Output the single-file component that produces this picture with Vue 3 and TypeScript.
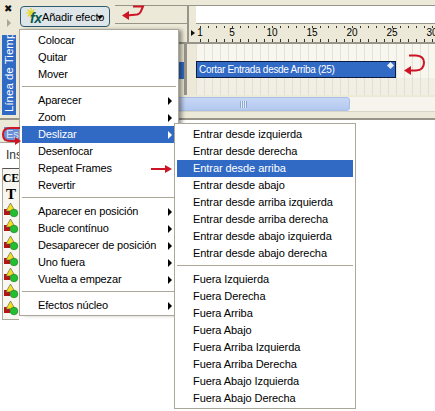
<template>
  <div class="app">
    <div class="top">
      <div class="rail">
        <span class="close">✖</span>
        <span class="play"></span>
        <div class="vtab"><span>Línea de Tiempo</span></div>
      </div>
      <div class="work">
        <div class="head">
          <div class="tools">
            <button class="fx-btn">
              <span class="fx-icon">
                <svg width="10" height="10" viewBox="0 0 10 10" class="spark">
                  <path d="M5 0V10M0 5H10M1.5 1.5L8.5 8.5M8.5 1.5L1.5 8.5" stroke="#e8d820" stroke-width="1.2" />
                </svg>
                <i>fx</i>
              </span>
              <span class="fx-label">Añadir efecto</span>
              <span class="caret"></span>
            </button>
          </div>
          <div class="layer-head"></div>
          <div class="frame-head">
            <div class="strip"></div>
            <div class="ruler">
              <span class="first-mark"></span>
              <span v-for="n in rulerMarks" :key="n" class="mark" :class="{ one: n === 1 }">{{ n }}</span>
            </div>
          </div>
        </div>
        <div class="tracks">
          <div class="layers"><div class="layer-sel"></div></div>
          <div class="frames">
            <div class="row"></div>
            <div class="row clip-row">
              <div class="clip">
                Cortar Entrada desde Arriba (25)
                <span class="key"></span>
              </div>
            </div>
            <div class="row tint"></div>
          </div>
        </div>
        <div class="hscroll">
          <div class="thumb"><span class="grip"></span></div>
        </div>
      </div>
    </div>

    <div class="lower">
      <div class="side">
        <div class="tabs"><span class="esc">Esc</span></div>
        <div class="ins">Ins</div>
        <div class="list">
          <b class="ce">CE</b>
          <b class="tt">T</b>
          <svg v-for="n in 7" :key="n" class="shapes" width="16" height="16" viewBox="0 0 16 16">
            <rect x="1" y="7" width="6" height="6" fill="#b01818" />
            <path d="M7.5 1L12 9H3Z" fill="#f2e020" stroke="#555" stroke-width="0.6" />
            <circle cx="11" cy="11" r="3.8" fill="#22c030" stroke="#157020" stroke-width="0.6" />
          </svg>
        </div>
      </div>
    </div>

    <div class="menu main-menu">
      <template v-for="(item, i) in mainItems" :key="i">
        <div v-if="item.sep" class="sep"></div>
        <div v-else class="item" :class="{ on: item.on }">
          {{ item.label }}
          <span v-if="item.sub" class="tri"></span>
        </div>
      </template>
    </div>

    <div class="menu sub-menu">
      <template v-for="(item, i) in subItems" :key="i">
        <div v-if="item.sep" class="sep"></div>
        <div v-else class="item" :class="{ on: item.on }">{{ item.label }}</div>
      </template>
    </div>

    <svg class="marks" width="435" height="411" viewBox="0 0 435 411">
      <g fill="none" stroke="#cc1525" stroke-width="2">
        <path d="M127 15.5L137 14.5Q140 14 141 11L143 6.5H133" />
        <path d="M410 70.5H416Q424 70 424 62.5Q424 56 416 55.5H409" />
        <path d="M151 169H167" />
        <path d="M20 128H10Q3 128 3 134.5Q3 141 10 141H17" />
      </g>
      <g fill="#cc1525">
        <path d="M122 15.5L129 11V20Z" />
        <path d="M404 70.5L411 66V75Z" />
        <path d="M172 169L165 165V173Z" />
        <path d="M21 141L15 137V145Z" />
      </g>
    </svg>
  </div>
</template>

<script setup lang="ts">
interface MenuItem {
  label?: string;
  sub?: boolean;
  on?: boolean;
  sep?: boolean;
}

const rulerMarks = [1, 5, 10, 15, 20, 25, 30];

const mainItems: MenuItem[] = [
  { label: "Colocar" },
  { label: "Quitar" },
  { label: "Mover" },
  { sep: true },
  { label: "Aparecer", sub: true },
  { label: "Zoom", sub: true },
  { label: "Deslizar", sub: true, on: true },
  { label: "Desenfocar" },
  { label: "Repeat Frames" },
  { label: "Revertir" },
  { sep: true },
  { label: "Aparecer en posición", sub: true },
  { label: "Bucle contínuo", sub: true },
  { label: "Desaparecer de posición", sub: true },
  { label: "Uno fuera", sub: true },
  { label: "Vuelta a empezar", sub: true },
  { sep: true },
  { label: "Efectos núcleo", sub: true },
];

const subItems: MenuItem[] = [
  { label: "Entrar desde izquierda" },
  { label: "Entrar desde derecha" },
  { label: "Entrar desde arriba", on: true },
  { label: "Entrar desde abajo" },
  { label: "Entrar desde arriba izquierda" },
  { label: "Entrar desde arriba derecha" },
  { label: "Entrar desde abajo izquierda" },
  { label: "Entrar desde abajo derecha" },
  { sep: true },
  { label: "Fuera Izquierda" },
  { label: "Fuera Derecha" },
  { label: "Fuera Arriba" },
  { label: "Fuera Abajo" },
  { label: "Fuera Arriba Izquierda" },
  { label: "Fuera Arriba Derecha" },
  { label: "Fuera Abajo Izquierda" },
  { label: "Fuera Abajo Derecha" },
];
</script>

<style>
html,
body {
  margin: 0;
  background: #fff;
}
</style>

<style scoped>
.app {
  position: relative;
  width: 435px;
  height: 411px;
  overflow: hidden;
  display: flex;
  flex-direction: column;
  background: #fff;
  font-family: "Liberation Sans", Arial, sans-serif;
  font-size: 11px;
  color: #000;
}

.top {
  display: flex;
  height: 120px;
  box-sizing: border-box;
  background: #ece9d8;
  border-bottom: 2px solid #97958a;
}

.rail {
  width: 20px;
  flex: none;
  display: flex;
  flex-direction: column;
  align-items: flex-start;
}

.close {
  margin: 2px 0 0 4px;
  height: 14px;
  font-size: 10px;
  line-height: 14px;
  color: #111;
}

.play {
  margin: 3px 0 0 7px;
  width: 0;
  height: 0;
  border-left: 4px solid #a9a793;
  border-top: 4px solid transparent;
  border-bottom: 4px solid transparent;
}

.vtab {
  margin: 8px 0 0 2px;
  width: 14px;
  height: 80px;
  background: #316ac5;
  overflow: hidden;
  display: flex;
  justify-content: center;
  align-items: flex-start;
  transform: rotate(180deg);
}

.vtab span {
  writing-mode: vertical-rl;
  padding-top: 3px;
  color: #fff;
  font-size: 11.5px;
  line-height: 14px;
  white-space: nowrap;
}

.work {
  flex: 1;
  min-width: 0;
  padding-top: 5px;
  display: flex;
  flex-direction: column;
}

.head {
  display: flex;
  height: 37px;
  flex: none;
  border-bottom: 2px solid #97958a;
}

.tools {
  width: 95px;
  flex: none;
  margin-top: 1px;
}

.fx-btn {
  position: relative;
  display: flex;
  align-items: center;
  box-sizing: border-box;
  width: 90px;
  height: 21px;
  padding: 0 0 0 5px;
  border: 1px solid #2e5a6e;
  border-radius: 4px;
  background: #dfe6ea;
  font: inherit;
  color: #000;
}

.fx-icon {
  position: relative;
  width: 16px;
  height: 17px;
  flex: none;
}

.spark {
  position: absolute;
  left: 0;
  top: 0;
}

.fx-icon i {
  position: absolute;
  left: 4px;
  top: 3px;
  font-family: "Liberation Sans", sans-serif;
  font-size: 14px;
  line-height: 14px;
  font-weight: bold;
  letter-spacing: -0.5px;
  color: #0a5a50;
}

.fx-label {
  white-space: nowrap;
  letter-spacing: -0.2px;
}

.caret {
  position: absolute;
  right: 6px;
  top: 9px;
  width: 0;
  height: 0;
  border-top: 3px solid #000;
  border-left: 3px solid transparent;
  border-right: 3px solid transparent;
}

.layer-head {
  width: 72px;
  flex: none;
  height: 19px;
  box-sizing: border-box;
  border-top: 1px solid #97958a;
  border-bottom: 1px solid #97958a;
}

.frame-head {
  flex: 1;
  min-width: 0;
  padding-left: 7px;
  border-left: 2px solid #97958a;
  border-top: 1px solid #97958a;
  display: flex;
  flex-direction: column;
}

.strip {
  height: 17px;
  flex: none;
  background: #fff;
  border-bottom: 1px solid #97958a;
}

.ruler {
  flex: 1;
  display: flex;
  align-items: center;
  background:
    repeating-linear-gradient(to right, #333 0 1px, transparent 1px 8px) 4px 2px / 100% 2px no-repeat,
    repeating-linear-gradient(to right, #333 0 1px, transparent 1px 8px) 4px 15px / 100% 3px no-repeat;
  white-space: nowrap;
  font-size: 10px;
  line-height: 12px;
}

.first-mark {
  flex: none;
  margin-left: -5px;
  margin-right: 1px;
  width: 0;
  height: 0;
  border-left: 4px solid #111;
  border-top: 3px solid transparent;
  border-bottom: 3px solid transparent;
}

.mark {
  flex: none;
  width: 40px;
  text-align: center;
}

.mark.one {
  width: 8px;
  margin-right: 8px;
}

.tracks {
  display: flex;
  height: 51px;
  flex: none;
  padding-left: 95px;
}

.layers {
  width: 72px;
  flex: none;
  box-sizing: border-box;
  padding-top: 18px;
  border-right: 3px solid #97958a;
}

.layer-sel {
  height: 17px;
  background: #316ac5;
}

.frames {
  flex: 1;
  min-width: 0;
  margin-left: 9px;
  display: flex;
  flex-direction: column;
}

.row {
  flex: 1;
  background: repeating-linear-gradient(to right, #e6e3d6 0 1px, #f7f6ef 1px 8px);
}

.row.tint {
  background: repeating-linear-gradient(to right, #e2dfcf 0 1px, #f1efe5 1px 8px);
}

.clip-row {
  flex: none;
  height: 17px;
}

.clip {
  position: relative;
  box-sizing: border-box;
  width: 200px;
  height: 17px;
  padding-left: 2px;
  border: 1px solid #0c1c40;
  background: #316ac5;
  color: #fff;
  font-size: 10px;
  letter-spacing: -0.3px;
  line-height: 15px;
  white-space: nowrap;
}

.key {
  position: absolute;
  right: 2px;
  top: 1px;
  width: 5px;
  height: 5px;
  background: #e8eef8;
  transform: rotate(45deg);
}

.hscroll {
  margin-top: 2px;
  height: 14px;
  flex: none;
  background: #f6f4ec;
  border-bottom: 1px solid #d8d5c4;
}

.thumb {
  width: 330px;
  height: 14px;
  box-sizing: border-box;
  display: flex;
  align-items: center;
  justify-content: flex-end;
  padding-right: 102px;
  border: 1px solid #a9bfe6;
  border-radius: 3px;
  background: linear-gradient(#c6d6f4, #b4c9f0);
}

.grip {
  width: 7px;
  height: 7px;
  background: repeating-linear-gradient(to right, #8ea6d2 0 1px, #e4ecfa 1px 2px);
}

.lower {
  flex: 1;
  display: flex;
}

.side {
  width: 20px;
  flex: none;
  display: flex;
  flex-direction: column;
}

.tabs {
  height: 23px;
  box-sizing: border-box;
  padding: 7px 0 0 4px;
  background: #ece9d8;
  border-bottom: 1px solid #aca899;
}

.esc {
  display: block;
  height: 14px;
  padding-left: 2px;
  background: #6b8fd6;
  color: #d8e2f6;
  line-height: 14px;
  overflow: hidden;
}

.ins {
  height: 25px;
  padding-left: 6px;
  font-size: 12px;
  line-height: 25px;
  color: #333;
  white-space: nowrap;
}

.list {
  box-sizing: border-box;
  margin-left: 2px;
  width: 17px;
  height: 152px;
  border-top: 1px solid #555;
  border-left: 1px solid #aca899;
  border-bottom: 1px solid #aca899;
  background: #f7f6f0;
  display: flex;
  flex-direction: column;
  align-items: center;
  overflow: hidden;
}

.ce,
.tt {
  height: 16px;
  flex: none;
  font-family: "Liberation Serif", serif;
  line-height: 16px;
  white-space: nowrap;
}

.ce {
  font-size: 12px;
  padding-top: 1px;
}

.tt {
  font-size: 15px;
}

.shapes {
  flex: none;
  margin-bottom: 0.3px;
}

.menu {
  position: absolute;
  box-sizing: border-box;
  background: #fff;
  border: 1px solid #aca899;
  padding: 2px;
}

.main-menu {
  left: 19px;
  top: 29px;
  width: 160px;
  height: 287px;
  letter-spacing: -0.15px;
  box-shadow: 4px 0 4px -1px rgba(0, 0, 0, 0.4);
}

.sub-menu {
  left: 174px;
  top: 123px;
  width: 182px;
  height: 286px;
  padding-bottom: 1px;
  letter-spacing: -0.07px;
}

.item {
  position: relative;
  height: 17px;
  line-height: 17px;
  padding-left: 16px;
  white-space: nowrap;
}

.item.on {
  background: #316ac5;
  color: #fff;
}

.sep {
  height: 1px;
  margin: 3px 0 5px;
  background: #aca899;
}

.tri {
  position: absolute;
  right: 4px;
  top: 5px;
  width: 0;
  height: 0;
  border-left: 4px solid #000;
  border-top: 4px solid transparent;
  border-bottom: 4px solid transparent;
}

.item.on .tri {
  border-left-color: #fff;
}

.marks {
  position: absolute;
  left: 0;
  top: 0;
  pointer-events: none;
}
</style>
